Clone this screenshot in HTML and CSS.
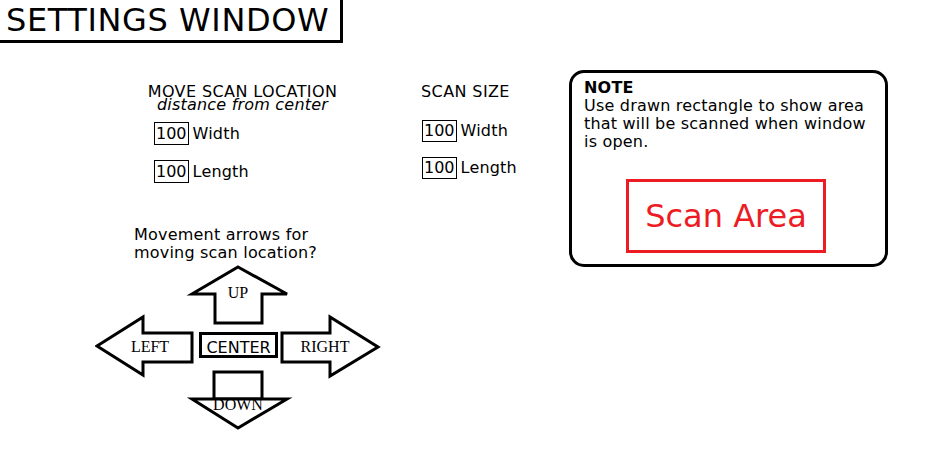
FILE: index.html
```html
<!DOCTYPE html>
<html lang="en">
<head>
<meta charset="UTF-8">
<meta name="viewport" content="width=device-width, initial-scale=1.0">
<title>Settings Window</title>
<link rel="stylesheet" href="styles.css">
</head>
<body>
  <div class="title-box">SETTINGS WINDOW</div>

  <div class="main">
    <div class="loc-col">
      <div class="loc-head">
        <div>MOVE SCAN LOCATION</div>
        <div class="sub">distance from center</div>
      </div>
      <div class="fields loc-fields">
        <div class="field"><span class="num">100</span> Width</div>
        <div class="field"><span class="num">100</span> Length</div>
      </div>

      <div class="move-text">Movement arrows for<br>moving scan location?</div>

      <!-- arrow pad -->
      <svg class="pad" width="290" height="170" viewBox="0 0 290 170">
        <polygon class="arrow" points="143,3 192,30 167,30 167,59 120,59 120,30 97,30"/>
        <polygon class="arrow" points="2,82 48,53 48,69 97,69 97,98 48,98 48,111"/>
        <polygon class="arrow" points="187,69 235,69 235,53 283,83 235,112 235,98 187,98"/>
        <rect class="arrow" x="119" y="108" width="48" height="27"/>
        <polygon class="arrow" points="97,135 192,135 143,164"/>
        <rect class="arrow" x="105.5" y="69.5" width="76" height="23"/>
        <text class="pad-label" x="143" y="34">UP</text>
        <text class="pad-label" x="55" y="88">LEFT</text>
        <text class="pad-label" x="230" y="88">RIGHT</text>
        <text class="pad-label" x="143" y="146">DOWN</text>
        <text class="pad-center" x="143.5" y="89">CENTER</text>
      </svg>
    </div>

    <div class="size-col">
      <div class="size-head">SCAN SIZE</div>
      <div class="fields size-fields">
        <div class="field"><span class="num">100</span> Width</div>
        <div class="field"><span class="num">100</span> Length</div>
      </div>
    </div>

    <div class="note">
      <div class="note-title">NOTE</div>
      <div class="note-text">Use drawn rectangle to show area<br>that will be scanned when window<br>is open.</div>
      <div class="scan-area">Scan Area</div>
    </div>
  </div>
</body>
</html>
```

FILE: styles.css
```css
body {
  margin: 0;
  padding: 0;
  background: #ffffff;
  color: #000000;
  font-family: "DejaVu Sans", Verdana, sans-serif;
  font-size: 16px;
  letter-spacing: 0.2px;
}

.title-box {
  display: inline-block;
  font-size: 32px;
  line-height: 40px;
  letter-spacing: 0.6px;
  padding: 0 11px 0 6px;
  border-right: 3px solid #000;
  border-bottom: 3px solid #000;
}

.main {
  display: flex;
  align-items: flex-start;
  padding-top: 27px;
  padding-left: 95px;
}

.loc-col {
  width: 326px;
  padding-top: 15px;
}

.loc-head {
  margin-left: 50px;
  width: 195px;
  text-align: center;
  line-height: 13px;
  letter-spacing: 0.4px;
}

.sub {
  font-style: italic;
  letter-spacing: 0.2px;
}

.fields {
  display: flex;
  flex-direction: column;
}

.field {
  display: flex;
  align-items: center;
  gap: 4px;
  line-height: 21px;
}

.num {
  border: 1px solid #000;
  padding: 0 1px;
  letter-spacing: 0;
}

.loc-fields {
  margin-left: 59px;
  margin-top: 11px;
  gap: 15px;
}

.move-text {
  margin-left: 39px;
  margin-top: 43px;
  line-height: 18px;
}

.pad {
  display: block;
  margin-top: 2px;
}

.arrow {
  fill: #ffffff;
  stroke: #000000;
  stroke-width: 3;
}

.pad-label {
  font-family: "Liberation Serif", "Times New Roman", serif;
  font-size: 16px;
  letter-spacing: 0;
  text-anchor: middle;
}

.pad-center {
  font-family: "DejaVu Sans", Verdana, sans-serif;
  font-size: 16px;
  letter-spacing: 0;
  text-anchor: middle;
}

.size-col {
  width: 148px;
  padding-top: 15px;
}

.size-head {
  line-height: 13px;
  letter-spacing: 0.4px;
}

.size-fields {
  margin-top: 22px;
  margin-left: 1px;
  gap: 15px;
}

.size-fields .field {
  line-height: 20px;
}

.note {
  width: 313px;
  height: 191px;
  border: 3px solid #000;
  border-radius: 15px;
}

.note-title {
  font-weight: bold;
  line-height: 18px;
  margin: 6px 0 0 12px;
}

.note-text {
  line-height: 18px;
  margin-left: 12px;
}

.scan-area {
  width: 194px;
  height: 68px;
  margin: 28px 0 0 54px;
  border: 3px solid #ed1c24;
  color: #ed1c24;
  font-size: 32px;
  line-height: 68px;
  letter-spacing: 0;
  text-align: center;
}
```
